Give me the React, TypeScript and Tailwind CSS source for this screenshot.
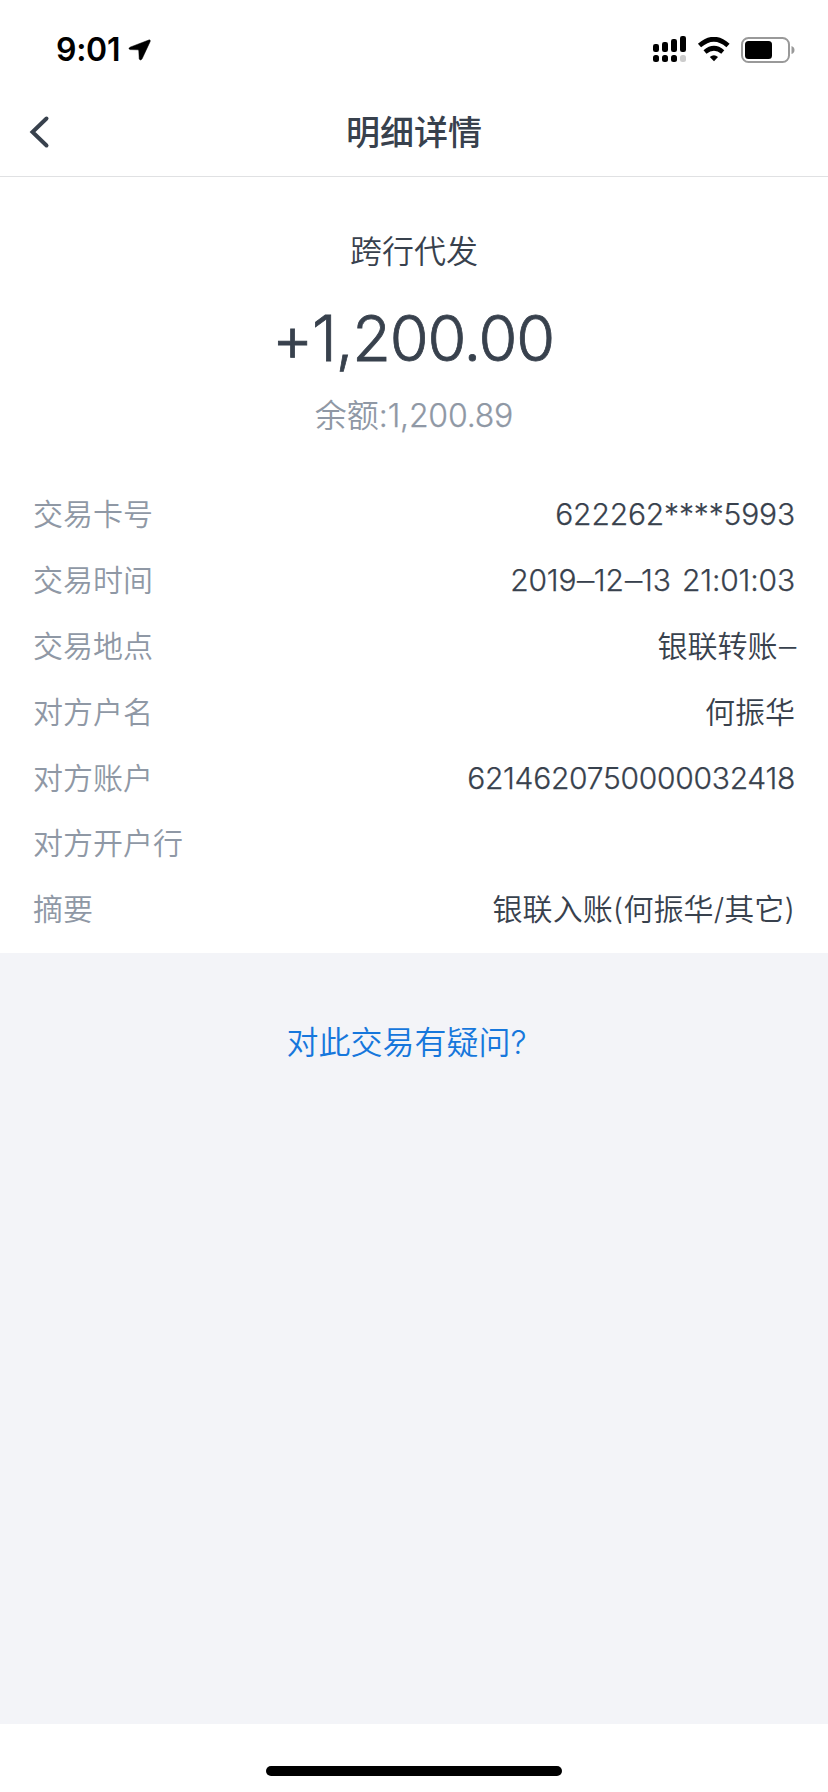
export default function App() {
  const rows = [
    { label: "交易卡号", value: "622262****5993", style: "tracking-[-0.15px] [-webkit-text-stroke:0.25px]" },
    { label: "交易时间", value: "2019–12–13 21:01:03", style: "tracking-[-0.15px] [word-spacing:3px] [-webkit-text-stroke:0.25px]" },
    { label: "交易地点", value: "银联转账–", style: "" },
    { label: "对方户名", value: "何振华", style: "" },
    { label: "对方账户", value: "6214620750000032418", style: "tracking-[-0.28px] [-webkit-text-stroke:0.25px]" },
    { label: "对方开户行", value: "", style: "" },
    { label: "摘要", value: "银联入账(何振华/其它)", style: "tracking-[0.1px]" },
  ];

  return (
    <main className="flex h-[1792px] w-[828px] flex-col bg-white font-[Inter,'Noto_Sans_CJK_SC',sans-serif] text-[#38414d]">
      <header className="flex h-[177px] flex-col border-b border-[#e0e1e3]">
        <div className="flex h-[88px] items-center justify-between pt-[11px] pr-[33px] pl-[56px] text-black">
          <div className="flex items-center gap-[8px]">
            <span className="text-[32px] leading-none font-semibold tracking-[-0.3px]">9:01</span>
            <svg width="24" height="22" viewBox="0 0 24 22">
              <path d="M20.8 1 L2 8.2 Q-.3 9.6 2 10.6 L10 10.8 Q10.8 10.9 10.8 12 L11.2 20 Q12.2 22 14 20 L22.2 2.4 Q22.6 .4 20.8 1Z" stroke="#000" strokeWidth=".5" />
            </svg>
          </div>
          <StatusIcons />
        </div>
        <div className="grid h-[88px] grid-cols-[88px_1fr_88px] items-center">
          <svg className="ml-[28px]" width="24" height="36" viewBox="0 0 24 36" fill="none" stroke="#38414d" strokeWidth="4" strokeLinecap="round">
            <path d="M18.5 4.5 L4.5 18 L18.5 31.5" strokeLinejoin="miter" />
          </svg>
          <h1 className="pt-[2px] text-center text-[34px] leading-none font-medium">明细详情</h1>
        </div>
      </header>

      <section className="flex flex-col items-center pt-[53px]">
        <p className="h-[44px] text-[32px] leading-[44px] font-[350]">跨行代发</p>
        <p className="mt-[19px] h-[90px] pr-[2px] text-[63px] leading-[90px] font-light tracking-[-1.2px] [-webkit-text-stroke:0.8px]">
          +1,200.00
        </p>
        <p className="mt-[11px] h-[44px] text-[32px] leading-[44px] font-[350] text-[#8f98a5]">
          余额<span className="tracking-[-0.2px] [-webkit-text-stroke:0.25px]">:1,200.89</span>
        </p>
      </section>

      <dl className="mt-[44px] h-[471px] px-[33px] text-[30px] font-[350]">
        {rows.map((row) => (
          <div key={row.label} className="flex h-[65.8px] items-center justify-between">
            <dt className="text-[#8f98a5]">{row.label}</dt>
            <dd className={row.style}>
              {row.value.split("–").map((part, i) => (
                <span key={i}>
                  {i > 0 && <span className="mr-[0.5px] ml-[2px] inline-block scale-x-115">–</span>}
                  {part}
                </span>
              ))}
            </dd>
          </div>
        ))}
      </dl>

      <section className="flex h-[771px] justify-center bg-[#f3f4f8] pt-[68px] pr-[15px]">
        <a href="#" className="h-[44px] text-[32px] leading-[44px] font-[350] text-[#1677dc]">
          对此交易有疑问?
        </a>
      </section>

      <footer className="flex flex-1 justify-center pt-[42px]">
        <div className="h-[10px] w-[296px] rounded-full bg-black" />
      </footer>
    </main>
  );
}

function StatusIcons() {
  return (
    <div className="flex items-center">
      <svg width="34" height="28" viewBox="0 0 34 28">
        <rect x="0" y="8" width="6" height="8" rx="2.2" />
        <rect x="9" y="6" width="6" height="10" rx="2.2" />
        <rect x="18" y="3" width="6" height="13" rx="2.2" />
        <rect x="27" y="0" width="6" height="16" rx="2.2" />
        <rect x="0" y="19" width="6" height="7" rx="2.5" />
        <rect x="9" y="19" width="6" height="7" rx="2.5" />
        <rect x="18" y="19" width="6" height="7" rx="2.5" />
        <rect x="27" y="19" width="6" height="7" rx="2.5" fill="#cccccc" />
      </svg>
      <svg className="ml-[10px]" width="34" height="26" viewBox="0 0 34 26">
        <path d="M2.5 8.5 Q17 -4 31 8.5" fill="none" stroke="#000" strokeWidth="4.8" />
        <path d="M8 15 Q17 7.5 25.8 15" fill="none" stroke="#000" strokeWidth="4.6" />
        <path d="M12.8 20 Q17 16.5 21 20 L17 24.2Z" />
      </svg>
      <svg className="ml-[10px]" width="54" height="26" viewBox="0 0 54 26">
        <rect x="1" y="1" width="47" height="24" rx="6.5" fill="none" stroke="#999" strokeWidth="2" />
        <rect x="4" y="4" width="27" height="18" rx="3.5" />
        <path d="M50.5 9 Q53.5 10 53.5 13 Q53.5 16 50.5 17Z" fill="#999" />
      </svg>
    </div>
  );
}
